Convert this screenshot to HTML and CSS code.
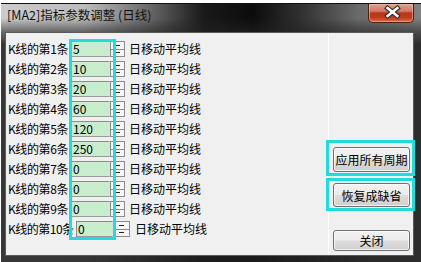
FILE: index.html
```html
<!DOCTYPE html>
<html>
<head>
<meta charset="utf-8">
<link rel="stylesheet" href="styles.css">
</head>
<body>
<div class="window">
  <div class="titlebar">
    <span class="title">[MA2]指标参数调整 (日线)</span>
    <div class="close">
      <svg width="46" height="19" viewBox="0 0 46 19">
        <path d="M20 5 L30 13 M30 5 L20 13" stroke="#3a2a26" stroke-width="5" stroke-linecap="square"/>
        <path d="M20 5 L30 13 M30 5 L20 13" stroke="#ffffff" stroke-width="2.6" stroke-linecap="square"/>
      </svg>
    </div>
  </div>
  <div class="client">
    <div class="params">
      <div class="row"><span class="lbl">K线的第1条</span><span class="edit">5</span><span class="spin"><i></i><i></i></span><span class="unit">日移动平均线</span></div>
      <div class="row"><span class="lbl">K线的第2条</span><span class="edit">10</span><span class="spin"><i></i><i></i></span><span class="unit">日移动平均线</span></div>
      <div class="row"><span class="lbl">K线的第3条</span><span class="edit">20</span><span class="spin"><i></i><i></i></span><span class="unit">日移动平均线</span></div>
      <div class="row"><span class="lbl">K线的第4条</span><span class="edit">60</span><span class="spin"><i></i><i></i></span><span class="unit">日移动平均线</span></div>
      <div class="row"><span class="lbl">K线的第5条</span><span class="edit">120</span><span class="spin"><i></i><i></i></span><span class="unit">日移动平均线</span></div>
      <div class="row"><span class="lbl">K线的第6条</span><span class="edit">250</span><span class="spin"><i></i><i></i></span><span class="unit">日移动平均线</span></div>
      <div class="row"><span class="lbl">K线的第7条</span><span class="edit">0</span><span class="spin"><i></i><i></i></span><span class="unit">日移动平均线</span></div>
      <div class="row"><span class="lbl">K线的第8条</span><span class="edit">0</span><span class="spin"><i></i><i></i></span><span class="unit">日移动平均线</span></div>
      <div class="row"><span class="lbl">K线的第9条</span><span class="edit">0</span><span class="spin"><i></i><i></i></span><span class="unit">日移动平均线</span></div>
      <div class="row row10"><span class="lbl">K线的第10条</span><span class="edit">0</span><span class="spin"><i></i><i></i></span><span class="unit">日移动平均线</span></div>
    </div>
    <div class="side">
      <button class="btn b1">应用所有周期</button>
      <button class="btn b2">恢复成缺省</button>
      <button class="btn b3">关闭</button>
    </div>
  </div>
</div>
<div class="hl hl-edits"></div>
<div class="hl hl-apply"></div>
<div class="hl hl-reset"></div>
</body>
</html>
```
FILE: styles.css
```css
* { box-sizing: border-box; }
body {
  margin: 0;
  width: 421px;
  height: 262px;
  overflow: hidden;
  background: #ffffff;
  font-family: "Noto Sans CJK SC", "Noto Sans", sans-serif;
  font-size: 12px;
  color: #000;
}
.window {
  margin: 3px 0 0 1px;
  width: 420px;
  height: 259px;
  display: flex;
  flex-direction: column;
  border-top: 1px solid #111;
  background:
    linear-gradient(to bottom, rgba(0,0,0,0) 0, rgba(0,0,0,0) 14px, rgba(35,35,35,0.55) 27px, rgba(30,30,30,0.85) 40px),
    linear-gradient(to right, #cccccc 0, #bcbcbc 20%, #6a6a6a 35%, #1a1a1a 48%, #0c0c0c 60%, #333333 72%, #6a6a6a 85%, #828282 100%);
}
.titlebar {
  height: 28px;
  display: flex;
  align-items: flex-start;
  padding-left: 6px;
}
.title {
  margin-top: 3px;
  line-height: 16px;
  font-size: 12.5px;
  color: #111;
  white-space: nowrap;
}
.close {
  margin-left: auto;
  margin-right: 7px;
  width: 46px;
  height: 19px;
  border: 1px solid #4a2018;
  border-top: none;
  border-radius: 0 0 5px 5px;
  background: linear-gradient(to bottom, #e0a090 0, #d27a66 40%, #b8361a 50%, #c03c1e 75%, #e06a44 100%);
  box-shadow: inset 0 0 0 1px rgba(255,200,180,0.5);
  display: flex;
}
.close svg { display: block; margin: -1px 0 0 -1px; }
.client {
  margin: 0 7px 0 4px;
  height: 224px;
  display: flex;
  background: #f0f0f0;
  border: 1px solid #5a5a5a;
}
.params {
  width: 323px;
  border-right: 1px solid #ffffff;
  padding: 6px 0 0 2px;
}
.row {
  display: flex;
  align-items: center;
  height: 20px;
}
.lbl {
  width: 63px;
  flex-shrink: 0;
  white-space: nowrap;
  letter-spacing: -0.4px;
  line-height: 14px;
}
.edit {
  width: 39px;
  height: 16px;
  flex-shrink: 0;
  background: #c7edcc;
  border: 1px solid;
  border-color: #8a8a8a #dedede #9a9a9a #8a8a8a;
  padding-left: 1px;
  line-height: 14px;
}
.spin {
  width: 15px;
  height: 16px;
  flex-shrink: 0;
  display: flex;
  flex-direction: column;
  border: 1px solid #8c8c8c;
  background: #f6f6f6;
}
.spin i {
  flex: 1;
  position: relative;
}
.spin i + i { border-top: 1px solid #8c8c8c; }
.spin i::after {
  content: "";
  position: absolute;
  left: 4px;
  top: 3px;
  width: 5px;
  height: 1px;
  background: #222;
}
.spin i + i::after { top: 2px; }
.unit {
  margin-left: 4px;
  line-height: 14px;
  white-space: nowrap;
}
.row10 .lbl { width: 68px; letter-spacing: -0.5px; }
.row10 .edit { width: 37px; }
.row10 .spin { width: 16px; margin-left: 1px; }
.row10 .unit { margin-left: 5px; }
.side {
  flex: 1;
  display: flex;
  flex-direction: column;
  padding: 114px 0 0 4px;
}
.btn {
  width: 77px;
  height: 25px;
  padding: 0;
  font: inherit;
  color: #000;
  border: 1px solid #707070;
  border-radius: 3px;
  background: linear-gradient(to bottom, #f2f2f2 0, #ebebeb 48%, #dddddd 52%, #cfcfcf 100%);
  box-shadow: inset 0 0 0 1px rgba(255,255,255,0.7);
}
.b2 { margin-top: 11px; height: 24px; }
.b3 { margin-top: 23px; height: 21px; }
.hl {
  position: absolute;
  border: 3px solid #20dcdc;
}
.hl-edits { left: 69px; top: 39px; width: 47px; height: 201px; }
.hl-apply { left: 326px; top: 140px; width: 89px; height: 36px; }
.hl-reset { left: 326px; top: 178px; width: 89px; height: 33px; }
```
